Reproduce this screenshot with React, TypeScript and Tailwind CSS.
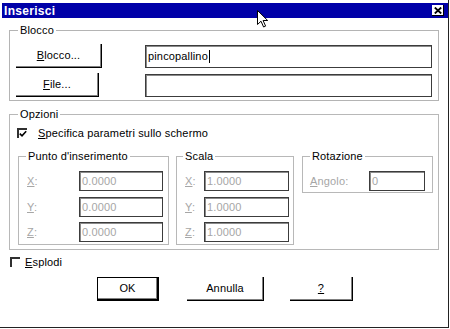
import React from "react";

function Btn({ className, children }: { className: string; children: React.ReactNode }) {
  return (
    <div
      className={
        "flex items-center justify-center border-r border-b border-black shadow-[inset_-1px_-1px_0_#808080] bg-white leading-none " +
        className
      }
    >
      {children}
    </div>
  );
}

function Field({ className, children, disabled = false }: { className: string; children?: React.ReactNode; disabled?: boolean }) {
  return (
    <div
      className={
        "flex items-center pl-[2px] border border-[#3c3c3c] shadow-[inset_1px_1px_0_#8a8a8a] bg-white leading-none " +
        (disabled ? "text-[#a6a6a6] " : "text-black ") +
        className
      }
    >
      {children}
    </div>
  );
}

function Check({ checked }: { checked: boolean }) {
  return (
    <div className="w-[10px] h-[10px] border-t-2 border-l-2 border-t-[#303030] border-l-[#303030] flex items-center justify-center">
      {checked ? (
        <svg width="8" height="8" viewBox="0 0 8 8">
          <path d="M0.8 3.6 L3 5.8 L7.2 1.2" fill="none" stroke="#000" strokeWidth="1.6" />
        </svg>
      ) : null}
    </div>
  );
}

function Row({ label, u, value, labelW, inputW, mt }: { label: string; u: string; value: string; labelW: string; inputW: string; mt: string }) {
  return (
    <div className={"flex items-center " + mt}>
      <div className={"text-[#a6a6a6] leading-none " + labelW}>
        <span className="underline">{u}</span>
        {label}
      </div>
      <Field className={inputW + " h-[20px]"} disabled>
        {value}
      </Field>
    </div>
  );
}

export default function App() {
  return (
    <div className="relative w-[450px] h-[329px] bg-white overflow-hidden font-['Liberation_Sans',Arial,sans-serif] text-[11px] tracking-[0.15px] text-black">
      <div className="w-[449px] h-[328px] border-r border-b border-[#222] flex flex-col">
        {/* Title bar */}
        <div className="ml-[2px] mt-[3px] w-[446px] h-[15px] bg-[#0000a8] flex items-center justify-between">
          <span className="ml-[2px] text-white font-bold text-[12px] leading-none tracking-[0.3px]">Inserisci</span>
          <div className="mr-[4px] w-[12px] h-[11px] bg-white border-r border-b border-black flex items-center justify-center">
            <svg width="8" height="7" viewBox="0 0 8 7">
              <path d="M0.8 0.5 L7.2 6.5 M7.2 0.5 L0.8 6.5" stroke="#000" strokeWidth="1.8" />
            </svg>
          </div>
        </div>

        {/* Blocco group */}
        <fieldset className="ml-[9px] mt-[6px] w-[430px] h-[77px] border border-[#b4b4b4] p-0">
          <legend className="ml-[8px] px-[2px] leading-[12px]">Blocco</legend>
          <div className="pl-[6px] pt-[8px] flex flex-col gap-[5px]">
            <div className="flex items-center">
              <Btn className="w-[86px] h-[24px]">
                <span>
                  <span className="underline">B</span>locco...
                </span>
              </Btn>
              <Field className="ml-[43px] w-[287px] h-[23px]">
                pincopallino
                <span className="inline-block w-px h-[13px] bg-black ml-[1px]" />
              </Field>
            </div>
            <div className="flex items-center">
              <Btn className="w-[83px] h-[24px]">
                <span>
                  <span className="underline">F</span>ile...
                </span>
              </Btn>
              <Field className="ml-[46px] w-[287px] h-[23px]" />
            </div>
          </div>
        </fieldset>

        {/* Opzioni group */}
        <fieldset className="ml-[9px] mt-[7px] w-[430px] h-[142px] border border-[#b8b8b8] p-0">
          <legend className="ml-[8px] px-[2px] leading-[12px]">Opzioni</legend>
          <div className="pl-[7px] pt-[7px] flex items-center h-[19px]">
            <Check checked />
            <span className="ml-[11px] leading-none">
              <span className="underline">S</span>pecifica parametri sullo schermo
            </span>
          </div>
          <div className="pl-[8px] mt-[11px] flex items-start">
            {/* Punto d'inserimento */}
            <fieldset className="w-[151px] h-[95px] border border-[#b8b8b8] p-0">
              <legend className="ml-[7px] px-[2px] leading-[12px]">Punto d'inserimento</legend>
              <div className="pl-[8px] pt-[9px] flex flex-col">
                <Row label=":" u="X" value="0.0000" labelW="w-[52px]" inputW="w-[84px]" mt="" />
                <Row label=":" u="Y" value="0.0000" labelW="w-[52px]" inputW="w-[84px]" mt="mt-[6px]" />
                <Row label=":" u="Z" value="0.0000" labelW="w-[52px]" inputW="w-[84px]" mt="mt-[5px]" />
              </div>
            </fieldset>
            {/* Scala */}
            <fieldset className="ml-[7px] w-[118px] h-[95px] border border-[#b8b8b8] p-0">
              <legend className="ml-[6px] px-[2px] leading-[12px]">Scala</legend>
              <div className="pl-[8px] pt-[9px] flex flex-col">
                <Row label=":" u="X" value="1.0000" labelW="w-[19px]" inputW="w-[85px]" mt="" />
                <Row label=":" u="Y" value="1.0000" labelW="w-[19px]" inputW="w-[85px]" mt="mt-[6px]" />
                <Row label=":" u="Z" value="1.0000" labelW="w-[19px]" inputW="w-[85px]" mt="mt-[5px]" />
              </div>
            </fieldset>
            {/* Rotazione */}
            <fieldset className="ml-[8px] w-[131px] h-[43px] border border-[#b8b8b8] p-0">
              <legend className="ml-[7px] px-[2px] leading-[12px]">Rotazione</legend>
              <div className="pl-[7px] pt-[9px] flex flex-col">
                <Row label="ngolo:" u="A" value="0" labelW="w-[59px]" inputW="w-[56px]" mt="" />
              </div>
            </fieldset>
          </div>
        </fieldset>

        {/* Esplodi */}
        <div className="ml-[10px] mt-[6px] h-[12px] flex items-center">
          <Check checked={false} />
          <span className="ml-[5px] leading-none">
            <span className="underline">E</span>splodi
          </span>
        </div>

        {/* Buttons */}
        <div className="ml-[97px] mt-[9px] flex items-center">
          <div className="w-[62px] h-[24px] flex items-center justify-center border-t border-l border-r-2 border-b-2 border-black shadow-[inset_-1px_-1px_0_#808080] leading-none">
            OK
          </div>
          <Btn className="ml-[28px] w-[77px] h-[24px]">Annulla</Btn>
          <Btn className="ml-[26px] w-[63px] h-[24px]">
            <span className="underline">?</span>
          </Btn>
        </div>
      </div>

      {/* Mouse pointer */}
      <svg className="absolute left-[257px] top-[10px]" width="12" height="18" viewBox="0 0 12 18">
        <path d="M0.5 0.5 L0.5 14.5 L4 11.2 L6.6 17 L8.6 16.1 L6.1 10.5 L10.7 10.5 Z" fill="#fff" stroke="#000" strokeWidth="1" strokeLinejoin="miter" />
      </svg>
    </div>
  );
}
